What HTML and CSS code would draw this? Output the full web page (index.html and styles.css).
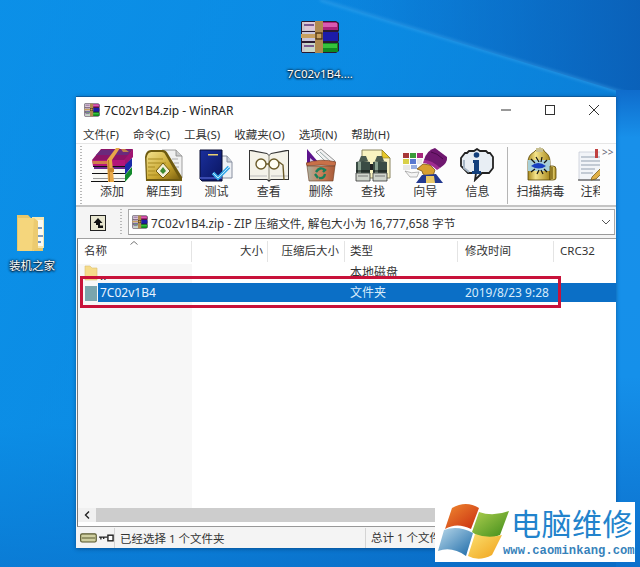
FILE: index.html
```html
<!DOCTYPE html>
<html lang="zh-CN">
<head>
<meta charset="utf-8">
<title>7C02v1B4.zip - WinRAR</title>
<link rel="stylesheet" href="styles.css">
</head>
<body>
<svg class="defs" width="0" height="0" aria-hidden="true">
  <defs>
    <linearGradient id="gGold" x1="0" y1="0" x2="1" y2="1"><stop offset="0" stop-color="#f2e08a"/><stop offset=".6" stop-color="#c8a52e"/><stop offset="1" stop-color="#7c6210"/></linearGradient>
    <linearGradient id="gNavy" x1="0" y1="0" x2="1" y2="1"><stop offset="0" stop-color="#1a2f9c"/><stop offset="1" stop-color="#0a1560"/></linearGradient>
    <linearGradient id="gBin" x1="0" y1="0" x2="1" y2="0"><stop offset="0" stop-color="#a8b0a0"/><stop offset=".5" stop-color="#c8805a"/><stop offset="1" stop-color="#a85a38"/></linearGradient>
    <linearGradient id="gCap" x1="0" y1="0" x2="1" y2="0"><stop offset="0" stop-color="#a88a20"/><stop offset=".35" stop-color="#f5e48a"/><stop offset="1" stop-color="#a8881c"/></linearGradient>
    <symbol id="rar" viewBox="0 0 40 34">
      <path d="M2 1h34l3 2v8l-1 1 1 1v8l-1 1 1 1v8l-3 2H2l-1-2V2z" fill="#2a1a30"/>
      <path d="M5 2h31l2 2v6H5z" fill="#a8207c"/><path d="M20 3h17v4H20z" fill="#d85ab0"/>
      <path d="M5 12h33v9H5z" fill="#1c1ca8"/><path d="M5 23h33v9H5z" fill="#108a20"/><path d="M22 24h15v4H22z" fill="#36c23c"/>
      <path d="M2 2h13v9H2zM2 12h13v9H2zM2 23h13v9H2z" fill="#e8e4e8" opacity=".85"/>
      <path d="M4 5h10M4 15h10M4 26h10" stroke="#7a5a90" stroke-width="2"/>
      <path d="M15 1h8v32h-8z" fill="#b08a50"/><path d="M1 14h22v4H1z" fill="#c8a060"/>
      <rect x="16" y="13" width="6" height="6" fill="none" stroke="#4a3010" stroke-width="1.2"/>
    </symbol>
    <symbol id="add" viewBox="0 0 42 34">
      <path d="M1 12 10 1h32l-7 11z" fill="#8c1468"/><path d="M5 7 10 2h30l-3 5z" fill="#6a2a7c"/>
      <path d="M33 12l9-11v8l-8 9z" fill="#a01470"/><path d="M33 18l8-8v8l-7 9z" fill="#1a2aa8"/><path d="M34 27l7-8v7l-7 8z" fill="#128a2c"/>
      <path d="M1 12h33v6H2z" fill="#b4157a"/><path d="M2 18h32v1H2z" fill="#111"/>
      <path d="M3 19h31v2H3z" fill="#6a2a90"/><path d="M2 21h32v4H2z" fill="#f8f8f4"/><path d="M1 25h33v1H1z" fill="#111"/>
      <path d="M2 26h32v7H2z" fill="#f8f8f4"/><path d="M2 30h32v1H2z" fill="#999"/><path d="M0 33h34v1H0z" fill="#111"/>
      <path d="M25 0h4l-8 12h-5z" fill="#e8a848"/><path d="M16 12h5l2 22h-6z" fill="#e8a848"/><path d="M17 12h1l1 22h-1z" fill="#b87820"/>
      <path d="M30 1h4l4 3h-6zM1 12l1 1h15v3H2z" fill="#d89a40" opacity=".8"/>
      <path d="M17 20h6v4h-6z" fill="#c8872c"/>
    </symbol>
    <symbol id="extract" viewBox="0 0 38 33">
      <path d="M17 1h14l6 6v22H22z" fill="#f0f0f0" stroke="#888" stroke-width=".8"/><path d="M31 1v6h6" fill="#ccc" stroke="#888" stroke-width=".8"/>
      <path d="M27 10h6M29 14h5M31 18h3" stroke="#aaa"/>
      <path d="M0 8Q1 1 6 1h12q3 0 5 4l14 23v4H1z" fill="#6e5a10"/>
      <path d="M1.500 9q1-6 5-6h10q3 0 4 3l14 24H2z" fill="url(#gGold)"/>
      <path d="M3 10h15M3 14h18M3 18h7M3 22h7M3 26h12" stroke="#a88a20"/>
      <path d="M18 14l7 8-7 7-7-7z" fill="#f4f0d8" stroke="#6e5a10"/><path d="M18 18l3 4-3 3-3-3z" fill="#3a8a30"/>
    </symbol>
    <symbol id="test" viewBox="0 0 34 33">
      <path d="M20 7h8l5 6v16H20z" fill="#eef0f4" stroke="#8890a0"/><path d="M28 7v6h5" fill="#c8ccd4" stroke="#8890a0"/>
      <path d="M1 1h22v31H3l-2-2z" fill="url(#gNavy)" stroke="#060a30"/>
      <path d="M9 5h10v1.500H9z" fill="#e8d070"/><path d="M1 28h22v2H1z" fill="#3a4ab0"/>
      <path d="M14 24l5 5 11-11" fill="none" stroke="#38a8e8" stroke-width="3.500"/>
      <path d="M14 24l5 5 11-11" fill="none" stroke="#bfeafc" stroke-width="1"/>
    </symbol>
    <symbol id="view" viewBox="0 0 40 34">
      <path d="M0 1h3l15 3 2 2 2-2 15-3h3v30H22l-2 2-2-2H0z" fill="#333"/>
      <path d="M1 2l17 3 2 2V31l-2-1H1zM39 2 22 5l-2 2V31l2-1h17z" fill="#f4f2e8"/>
      <path d="M1 27h17M22 27h17" stroke="#bbb"/>
      <path d="M20 7v24" stroke="#8a8878"/>
      <circle cx="12" cy="15" r="5" fill="#fffef4" stroke="#6a5a28" stroke-width="1.400"/><circle cx="25" cy="15" r="5" fill="#fffef4" stroke="#6a5a28" stroke-width="1.400"/>
      <path d="M17 15h3M30 13l4 3 1 15" fill="none" stroke="#6a5a28" stroke-width="1.400"/>
    </symbol>
    <symbol id="del" viewBox="0 0 30 34">
      <path d="M1 1l12 14H1z" fill="#5c148c"/><path d="M4 10l6 5H4z" fill="#d8c8e8"/>
      <path d="M10 4l5-3 14 12-6 4z" fill="#f2f2f2" stroke="#777" stroke-width=".8"/><path d="M14 4l11 10M12 6l9 9" stroke="#9aa" />
      <path d="M0 15q15-5 30-1l-1 4q-14-2-28 0z" fill="#c87048" stroke="#6a3018" stroke-width=".6"/>
      <path d="M1 18h28l-2 15H3z" fill="url(#gBin)" stroke="#6a3a20" stroke-width=".6"/>
      <path d="M10 24q4-6 9-2l-2 2M19 26q-1 5-6 4M9 26l3 4" fill="none" stroke="#16805a" stroke-width="2.400"/>
    </symbol>
    <symbol id="find" viewBox="0 0 36 33">
      <path d="M7 1h20l8 8v20H7z" fill="#f8f2c0" stroke="#8a8460"/><path d="M27 1l8 8h-8z" fill="#e8c828" stroke="#8a7a20" stroke-width=".6"/>
      <path d="M4 12l2-5h5l2 5z" fill="#4a5a50"/><path d="M20 12l2-5h5l2 5z" fill="#4a5a50"/>
      <path d="M1 13q7-2 14 0v11H1z" fill="#3a4c44"/><path d="M18 13q7-2 14 0v11H18z" fill="#3a4c44"/>
      <path d="M3 13h3v11H3zM20 13h3v11h-3z" fill="#8aa090"/>
      <path d="M1 24h14v8H1zM18 24h14v8H18z" fill="#d0d4cc" stroke="#333" stroke-width=".8"/>
      <path d="M1 22h14M18 22h14" stroke="#111"/><path d="M3 27h10M20 27h10" stroke="#777"/>
      <path d="M15 15h3v6h-3z" fill="#222"/>
    </symbol>
    <symbol id="wizard" viewBox="0 0 46 36">
      <path d="M1 6h6v5H1z" fill="#a83838"/><path d="M8 6h6v5H8z" fill="#3a9a3a"/><path d="M15 6h6v5h-6z" fill="#a8287c"/>
      <path d="M1 12h6v5H1z" fill="#d8d048"/><path d="M8 12h6v5H8z" fill="#5a7ad0"/><path d="M15 12h5v5h-5z" fill="#e8e8e8"/>
      <path d="M1 18h7v5H1z" fill="#e8e8e8"/><path d="M9 18h6v4H9z" fill="#9ab0e0"/>
      <path d="M3 24q6 3 14 1l-2 5H8z" fill="#f4f4f4" stroke="#888" stroke-width=".6"/>
      <path d="M22 13Q25 3 33 1l12 9q1 6-7 11z" fill="#701870"/><path d="M22 13q8 0 16 8l-3 2q-6-6-14-7z" fill="#a02c90"/><path d="M29 5q6 1 12 7" stroke="#4a0a4a" fill="none"/>
      <path d="M21 17l7 1 5 5-2 6h-7l-3-2-1-3-5-2z" fill="#d8a030" stroke="#6a4808" stroke-width=".7"/>
      <path d="M14 36l6-8 14-1 7 9z" fill="#233a90"/><path d="M24 29h8l1 7h-9z" fill="#e8c868"/>
    </symbol>
    <symbol id="info" viewBox="0 0 34 34">
      <path d="M9 3h5l3-2 3 2h6l2 2h2l3 4v11l-4 5h-7l-7 7 1-7H8l-7-7V10l4-5h2z" fill="#e8eef4" stroke="#222" stroke-width="1.800"/>
      <path d="M4 12v8l5 4" fill="none" stroke="#a8b8c8" stroke-width="2"/>
      <circle cx="16.500" cy="7" r="2.800" fill="#13407c"/><path d="M13 12h6v11h2v3h-9v-3h2v-8h-1z" fill="#13407c"/>
    </symbol>
    <symbol id="scan" viewBox="0 0 32 35">
      <path d="M9 5q3-4 6-4t5 4q5 3 5 10v18H3V15q0-7 6-10z" fill="url(#gCap)" stroke="#5a4808" stroke-width=".8"/>
      <path d="M11 1h7v4h-7z" fill="#c8c090"/>
      <path d="M3 13h22v11H3z" fill="#a8d0d8"/><path d="M6 19q7-6 15 0-7 5-15 0z" fill="#1840c0"/>
      <path d="M6 12l4 4M11 10l3 5M17 10l-1 5M22 13l-3 3M6 25l4-3M12 27l2-4M18 27l-2-4M22 25l-3-3" stroke="#111" stroke-width="1.200"/>
      <path d="M25 19h3q3 0 3 3v9q0 2-3 2h-3z" fill="url(#gCap)" stroke="#5a4808" stroke-width=".8"/><path d="M27 20v12" stroke="#7a6210" stroke-width="1.500"/>
    </symbol>
    <symbol id="note" viewBox="0 0 30 34">
      <path d="M1 4h27v28H1z" fill="#f2f4f8" stroke="#b8c0cc" stroke-width=".6"/>
      <path d="M3 9h20M3 13h20M3 17h20M3 21h14M3 25h12" stroke="#93a0b0"/>
      <path d="M17 1h3v9h-3z" fill="#c04040"/>
      <path d="M0 32h22" stroke="#333"/><path d="M14 29l12-12 3 3-11 11-5 1z" fill="#e0b048" stroke="#6a5010" stroke-width=".7"/>
    </symbol>
    <symbol id="folderbig" viewBox="0 0 32 40">
      <path d="M1 2h11l3 3h12v33H1z" fill="#e8c76a"/>
      <path d="M16 4h12v31H16z" fill="#f6e6b0"/><path d="M19 7h8v26h-8z" fill="#fbfaf2"/>
      <path d="M21 14h5v2h-5zM21 22h6v2h-6zM21 28h4v2h-4z" fill="#7a9ac0"/>
      <path d="M2 5h16v33H4q-3 0-2-4z" fill="#f5d67c"/><path d="M16 38l6-3V8l-4-3z" fill="#eccb70"/>
    </symbol>
  </defs>
</svg>

<main class="desktop">
  <svg class="wallpaper" viewBox="0 0 640 567" width="640" height="567" preserveAspectRatio="none" aria-hidden="true">
    <defs>
      <linearGradient id="wA" x1="0" y1="0" x2="1" y2=".35"><stop offset="0" stop-color="#0c90ea"/><stop offset=".55" stop-color="#0a82de"/><stop offset="1" stop-color="#0a60bc"/></linearGradient>
      <linearGradient id="wB" x1="0" y1="0" x2="0" y2="1"><stop offset="0" stop-color="#0f6ccc"/><stop offset=".1" stop-color="#1890ea"/><stop offset=".6" stop-color="#1590ea"/><stop offset="1" stop-color="#0c70cc"/></linearGradient>
      <linearGradient id="wC" x1="0" y1="0" x2="0" y2="1"><stop offset="0" stop-color="#0b90e6"/><stop offset=".75" stop-color="#0c90e6"/><stop offset="1" stop-color="#0a74cc"/></linearGradient>
      <linearGradient id="wD" x1="0" y1="0" x2="1" y2="0"><stop offset="0" stop-color="#0a66c4" stop-opacity=".1"/><stop offset="1" stop-color="#0a5cb4" stop-opacity=".85"/></linearGradient>
      <filter id="wBlur"><feGaussianBlur stdDeviation="1.500"/></filter>
    </defs>
    <rect width="640" height="567" fill="url(#wA)"/>
    <path d="M0 0H640V567H0z" fill="url(#wC)" opacity=".6"/>
    <path d="M320 0 640 98V0z" fill="url(#wD)"/>
    <path d="M320 0 640 98" stroke="#4aaef0" stroke-width="3" fill="none" opacity=".4" filter="url(#wBlur)"/>
    <path d="M616 90h24v477h-24z" fill="url(#wB)"/>
  </svg>

  <div class="desk-icon desk-rar">
    <svg class="desk-glyph-rar"><use href="#rar"/></svg>
    <span class="desk-label">7C02v1B4....</span>
  </div>
  <div class="desk-icon desk-folder">
    <svg class="desk-glyph-folder"><use href="#folderbig"/></svg>
    <span class="desk-label">装机之家</span>
  </div>

  <section class="window">
    <header class="titlebar">
      <svg class="title-icon"><use href="#rar"/></svg>
      <span class="title-text">7C02v1B4.zip - WinRAR</span>
      <div class="win-controls">
        <svg class="win-btn" viewBox="0 0 12 12"><path d="M1 6h10" stroke="#333" stroke-width="1"/></svg>
        <svg class="win-btn" viewBox="0 0 12 12"><rect x="1.500" y="1.500" width="9" height="9" fill="none" stroke="#333"/></svg>
        <svg class="win-btn" viewBox="0 0 12 12"><path d="M1 1l10 10M11 1 1 11" stroke="#333" fill="none"/></svg>
      </div>
    </header>
    <nav class="menubar">
      <span>文件(F)</span><span>命令(C)</span><span>工具(S)</span><span>收藏夹(O)</span><span>选项(N)</span><span>帮助(H)</span>
    </nav>
    <div class="toolbar">
      <i class="grip"></i>
      <div class="tools">
        <div class="tool"><svg class="ti ti-add"><use href="#add"/></svg><span>添加</span></div>
        <div class="tool"><svg class="ti ti-extract"><use href="#extract"/></svg><span>解压到</span></div>
        <div class="tool"><svg class="ti ti-test"><use href="#test"/></svg><span>测试</span></div>
        <div class="tool"><svg class="ti ti-view"><use href="#view"/></svg><span>查看</span></div>
        <div class="tool"><svg class="ti ti-del"><use href="#del"/></svg><span>删除</span></div>
        <div class="tool"><svg class="ti ti-find"><use href="#find"/></svg><span>查找</span></div>
        <div class="tool"><svg class="ti ti-wizard"><use href="#wizard"/></svg><span>向导</span></div>
        <div class="tool"><svg class="ti ti-info"><use href="#info"/></svg><span>信息</span></div>
        <i class="tool-sep"></i>
        <div class="tool tool-wide"><svg class="ti ti-scan"><use href="#scan"/></svg><span>扫描病毒</span></div>
        <div class="tool"><svg class="ti ti-note"><use href="#note"/></svg><span>注释</span></div>
      </div>
      <span class="more">&gt;&gt;</span>
    </div>
    <div class="addressbar">
      <div class="up-btn">
        <svg class="up-icon" viewBox="0 0 16 16"><rect x=".5" y=".5" width="15" height="15" fill="#e8e6d0" stroke="#222"/><path d="M8 3 3.500 8H6v2h2v3h5v-2.500H10V8h2.500z" fill="#111"/></svg>
      </div>
      <i class="grip grip-short"></i>
      <div class="combo">
        <svg class="combo-icon"><use href="#rar"/></svg>
        <span class="combo-text">7C02v1B4.zip - ZIP 压缩文件, 解包大小为 16,777,658 字节</span>
        <svg class="chevron" viewBox="0 0 10 6"><path d="M1 1l4 4 4-4" fill="none" stroke="#555"/></svg>
      </div>
    </div>
    <div class="listview">
      <div class="list-head">
        <span class="col c-name">名称<svg class="sort" viewBox="0 0 8 4"><path d="M.5 3.500 4 .5l3.500 3" fill="none" stroke="#777"/></svg></span>
        <span class="col c-size">大小</span>
        <span class="col c-pack">压缩后大小</span>
        <span class="col c-type">类型</span>
        <span class="col c-date">修改时间</span>
        <span class="col c-crc">CRC32</span>
      </div>
      <div class="list-body">
        <div class="row row-up">
          <span class="cell c-name"><svg class="row-folder" viewBox="0 0 14 16"><path d="M1 1h5l2 2h5v12H1z" fill="#f6dc8a" stroke="#dcc070" stroke-width=".6"/></svg><span class="dots">..</span></span>
          <span class="cell c-size"></span><span class="cell c-pack"></span>
          <span class="cell c-type">本地磁盘</span>
        </div>
        <div class="row row-sel">
          <span class="cell c-name"><i class="row-tile"></i><span class="sel-text">7C02v1B4</span></span>
          <span class="cell c-size"></span><span class="cell c-pack"></span>
          <span class="cell c-type">文件夹</span>
          <span class="cell c-date">2019/8/23 9:28</span>
        </div>
      </div>
      <div class="hscroll">
        <svg class="hs-arrow" viewBox="0 0 6 8"><path d="M5 .5 1.500 4 5 7.500" fill="none" stroke="#222" stroke-width="1.400"/></svg>
        <i class="hs-thumb"></i>
      </div>
    </div>
    <footer class="statusbar">
      <div class="st-icons">
        <svg class="st-drive" viewBox="0 0 18 10"><rect x=".7" y=".7" width="16.500" height="8.500" rx="1.500" fill="#cfcfa0" stroke="#55552a" stroke-width="1.200"/><path d="M2 5h14" stroke="#55552a"/></svg>
        <svg class="st-key" viewBox="0 0 16 8"><path d="M0 3h9M2 3v2.500M5 3v2" stroke="#222" stroke-width="1.400"/><rect x="9.500" y="1" width="5.500" height="6" fill="#fff" stroke="#222" stroke-width="1.500"/></svg>
      </div>
      <span class="st-left">已经选择 1 个文件夹</span>
      <span class="st-right">总计 1 个文件夹</span>
    </footer>
    <div class="callout"></div>
  </section>

  <aside class="watermark">
    <svg class="wm-logo" viewBox="0 0 76 60" aria-hidden="true">
      <defs>
        <linearGradient id="fR" x1="0" y1="0" x2="1" y2="1"><stop offset="0" stop-color="#f08a30"/><stop offset="1" stop-color="#c82c10"/></linearGradient>
        <linearGradient id="fG" x1="0" y1="0" x2="1" y2="1"><stop offset="0" stop-color="#b0d050"/><stop offset="1" stop-color="#3c8a18"/></linearGradient>
        <linearGradient id="fB" x1="0" y1="0" x2="1" y2="1"><stop offset="0" stop-color="#b8d8ea"/><stop offset="1" stop-color="#1c6aa8"/></linearGradient>
        <linearGradient id="fY" x1="0" y1="0" x2="1" y2="1"><stop offset="0" stop-color="#fbe070"/><stop offset="1" stop-color="#f0a018"/></linearGradient>
      </defs>
      <path d="M17 6Q31 -2 44 6L36 27Q22 20 10 27z" fill="url(#fR)"/>
      <path d="M44 10Q58 15 74 9L65 33Q50 40 37 30z" fill="url(#fG)"/>
      <path d="M9 28Q23 23 38 31L31 54Q17 44 3 49z" fill="url(#fB)"/>
      <path d="M40 32Q53 37 67 33L57 53Q44 60 33 54z" fill="url(#fY)"/>
    </svg>
    <div class="wm-text">
      <strong class="wm-cn">电脑维修</strong>
      <span class="wm-url">www.caominkang.com</span>
    </div>
  </aside>
</main>
</body>
</html>
```
FILE: styles.css
```css
* { box-sizing: border-box; }
html, body { margin: 0; padding: 0; }
body {
  width: 640px;
  height: 567px;
  overflow: hidden;
  font-family: "Noto Sans", "Noto Sans CJK SC", sans-serif;
  font-size: 12px;
  color: #2a2a2a;
}
.defs { position: absolute; }
.desktop { position: relative; width: 640px; height: 567px; overflow: hidden; }
.wallpaper { position: absolute; left: 0; top: 0; }

.desk-icon {
  position: absolute;
  display: flex;
  flex-direction: column;
  align-items: center;
}
.desk-rar { left: 280px; top: 20px; width: 80px; }
.desk-folder { left: 0; top: 213px; width: 64px; }
.desk-glyph-rar { width: 40px; height: 34px; }
.desk-glyph-folder { width: 32px; height: 40px; }
.desk-label {
  color: #fff;
  font-size: 11.500px;
  line-height: 16px;
  text-shadow: 0 1px 2px #012, 0 0 3px #123, 0 0 2px #123;
}
.desk-rar .desk-label { margin-top: 12px; }
.desk-folder .desk-label { margin-top: 5px; }

.window {
  position: absolute;
  left: 76px;
  top: 96px;
  width: 540px;
  height: 452px;
  background: #f6f6f6;
  display: flex;
  flex-direction: column;
  border-top: 1px solid #0d5a9c;
  box-shadow: 0 1px 4px rgba(0, 30, 70, .45);
}
.titlebar {
  height: 28px;
  background: #fff;
  display: flex;
  align-items: center;
  padding: 0 0 2px 8px;
  flex: none;
}
.title-icon { width: 16px; height: 16px; }
.title-text { margin-left: 4px; font-size: 12px; color: #222; }
.win-controls { margin-left: auto; display: flex; }
.win-btn { width: 12px; height: 12px; margin: 0 16px; }

.menubar {
  height: 18px;
  background: #fff;
  display: flex;
  align-items: center;
  gap: 14px;
  padding: 0 7px;
  flex: none;
  font-size: 11.500px;
  color: #333;
}
.toolbar {
  position: relative;
  height: 64px;
  flex: none;
  display: flex;
  background: #fdfdfd;
  border-top: 1px solid #e6e6e6;
  border-bottom: 2px solid #c4c4c4;
}
.grip {
  width: 2px;
  margin: 2px 0 0 4px;
  flex: none;
  background-image: linear-gradient(#b8b8b8 50%, transparent 50%);
  background-size: 2px 3px;
}
.tools {
  position: relative;
  display: flex;
  margin-left: 4px;
  width: 514px;
  overflow: hidden;
  flex: none;
}
.tool {
  width: 52.200px;
  flex: none;
  display: flex;
  flex-direction: column;
  align-items: center;
}
.tool span { font-size: 12px; line-height: 16px; position: absolute; top: 40px; color: #333; white-space: nowrap; }
.ti { height: 36px; margin-top: 4px; display: block; }
.ti-add { width: 42px; height: 34px; }
.ti-extract { width: 38px; height: 33px; margin-top: 5px; }
.ti-test { width: 34px; height: 33px; margin-top: 5px; }
.ti-view { width: 40px; height: 34px; margin-top: 5px; }
.ti-del { width: 30px; height: 34px; margin-top: 4px; }
.ti-find { width: 36px; height: 33px; margin-top: 5px; }
.ti-wizard { width: 46px; height: 36px; margin-top: 3px; }
.ti-info { width: 34px; height: 34px; margin-top: 4px; }
.ti-scan { width: 32px; height: 35px; margin-top: 3px; }
.ti-note { width: 30px; height: 34px; margin-top: 4px; }
.tool-sep {
  width: 1px;
  margin: 3px 7px 1px 3px;
  background: #b5b5b5;
  flex: none;
}
.tool-wide { width: 52px; }
.more {
  position: absolute;
  left: 526px;
  top: 0;
  font-size: 10px;
  line-height: 16px;
  color: #667;
}

.addressbar {
  height: 31px;
  flex: none;
  display: flex;
  align-items: stretch;
  background: #f4f4f4;
  padding-top: 2px;
}
.up-btn {
  width: 44px;
  display: flex;
  align-items: center;
  justify-content: center;
  flex: none;
}
.up-icon { width: 16px; height: 16px; margin-bottom: 2px; }
.grip-short { margin: 0 3px 3px 0; }
.combo {
  flex: 1;
  margin: 0 1px 3px 3px;
  background: #fff;
  border: 1px solid #a9a9a9;
  border-bottom-color: #9a9a9a;
  display: flex;
  align-items: center;
  padding: 0 3px;
}
.combo-icon { width: 16px; height: 16px; flex: none; }
.combo-text { margin-left: 3px; white-space: nowrap; font-size: 11.700px; color: #333; }
.chevron { width: 10px; height: 6px; margin: 0 0 0 auto; }

.listview {
  flex: 1;
  min-height: 0;
  margin: 0 0 0 1px;
  background: #fff;
  border-left: 1px solid #777;
  border-top: 1px solid #a0a0a0;
  border-bottom: 1px solid #999;
  display: flex;
  flex-direction: column;
  position: relative;
}
.list-head {
  height: 25px;
  flex: none;
  display: flex;
  background: #fff;
  align-items: center;
  color: #333;
  font-size: 11.500px;
}
.col { height: 21px; line-height: 20px; border-right: 1px solid #e4e4e4; padding: 0 6px; flex: none; position: relative; }
.c-name { width: 114px; }
.c-size { width: 76px; text-align: right; padding-right: 4px; }
.c-pack { width: 77px; text-align: right; padding-right: 5px; }
.c-type { width: 113px; padding-left: 5px; }
.c-date { width: 96px; padding-left: 7px; }
.c-crc { border-right: 0; flex: 1; padding-left: 6px; }
.sort { position: absolute; left: 52px; top: 0; width: 8px; height: 4px; }

.list-body {
  flex: 1;
  min-height: 0;
  display: flex;
  flex-direction: column;
  background: linear-gradient(90deg, #f7f7f7 114px, #fff 114px);
}
.row { display: flex; height: 19px; line-height: 16px; flex: none; }
.cell { display: flex; align-items: flex-start; flex: none; padding-top: 1px; }
.cell.c-name { padding-left: 6px; }
.cell.c-type { padding-left: 5px; }
.cell.c-date { padding-left: 7px; width: auto; white-space: nowrap; }
.row-up .c-type { color: #333; }
.dots { margin-top: 3px; }
.row-folder { width: 14px; height: 16px; margin-right: 2px; flex: none; }
.row-sel {
  background: linear-gradient(90deg, transparent 20px, #0b6fc6 20px);
  color: #d8ecfb;
}
.row-tile { width: 12px; height: 15px; background: #7ba5ad; margin: 1px 3px 0 1px; flex: none; }
.sel-text { color: #e8f4ff; }
.row-sel .cell { padding-top: 2px; }

.hscroll {
  height: 14px;
  flex: none;
  background: #f0f0f0;
  display: flex;
  align-items: stretch;
  margin-bottom: 4px;
}
.hs-arrow { width: 6px; height: 8px; margin: 3px 6px 0 6px; flex: none; }
.hs-thumb { flex: 1; background: #cdcdcd; }

.statusbar {
  height: 21px;
  flex: none;
  display: flex;
  align-items: center;
  background: #f4f4f4;
  position: relative;
  font-size: 11.500px;
  padding-top: 1px;
}
.st-icons { display: flex; align-items: center; gap: 2px; width: 39px; padding-left: 4px; height: 100%; border-right: 1px solid #d4d4d4; flex: none; }
.st-drive { width: 17px; height: 10px; flex: none; }
.st-key { width: 15px; height: 8px; flex: none; }
.st-left { margin-left: 5px; width: 245px; color: #333; }
.st-right { padding-left: 5px; border-left: 1px solid #d4d4d4; height: 100%; line-height: 20px; color: #333; }

.callout {
  position: absolute;
  left: 4px;
  top: 179px;
  width: 481px;
  height: 32px;
  border: 3px solid #c8123a;
  pointer-events: none;
}

.watermark {
  position: absolute;
  left: 435px;
  top: 502px;
  width: 200px;
  height: 60px;
  background: #fff;
  display: flex;
  overflow: hidden;
}
.wm-logo { width: 76px; height: 60px; flex: none; }
.wm-text { display: flex; flex-direction: column; }
.wm-cn {
  font-family: "Noto Sans CJK SC", sans-serif;
  font-size: 30px;
  font-weight: 400;
  line-height: 40px;
  letter-spacing: .5px;
  color: #2283cc;
  margin-left: 0;
  white-space: nowrap;
}
.wm-url {
  font-family: "Liberation Mono", monospace;
  font-size: 12.200px;
  line-height: 18px;
  font-weight: 700;
  color: #3782ba;
  white-space: nowrap;
  margin-left: -8px;
}
```
